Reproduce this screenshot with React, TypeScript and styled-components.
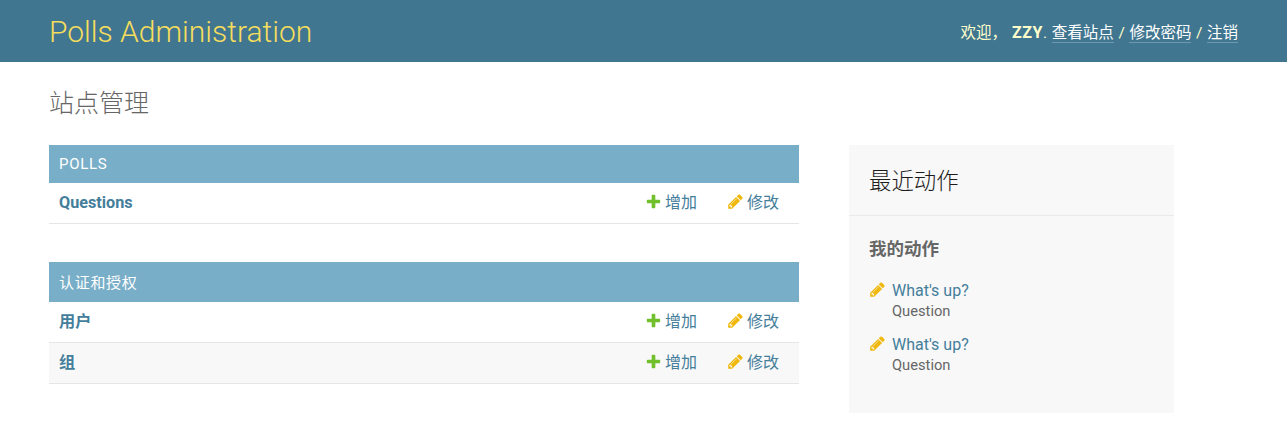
import React from "react";
import styled, { createGlobalStyle } from "styled-components";

const Global = createGlobalStyle`
  html, body { margin: 0; padding: 0; background: #fff; }
  body { font-family: Roboto, "Noto Sans CJK SC", sans-serif; font-size: 14px; color: #333; }
  * { box-sizing: border-box; }
`;

const Header = styled.header`
  height: 62px;
  background: #417690;
  padding: 0 49px;
  display: flex;
  align-items: center;
  justify-content: space-between;
`;
const Brand = styled.h1`
  margin: 0;
  font-size: 30px;
  font-weight: 300;
  color: #f5dd5d;
`;
const UserTools = styled.div`
  font-size: 15.5px;
  font-weight: 400;
  color: #ffc;
  white-space: pre;
  word-spacing: 0.75px;
`;
const UserName = styled.strong`
  font-weight: 700;
  margin-left: 5px;
  font-size: 16px;
  letter-spacing: 0.6px;
`;
const ToolLink = styled.a`
  color: #fff;
  border-bottom: 1px solid rgba(255, 255, 255, 0.25);
`;
const Main = styled.main`
  padding: 24px 49px 0;
`;
const Title = styled.h2`
  margin: 0 0 24px;
  font-size: 25px;
  font-weight: 300;
  line-height: 35px;
  color: #666;
`;
const Columns = styled.div`
  display: flex;
  gap: 50px;
  align-items: flex-start;
`;
const Content = styled.div`
  width: 750px;
  display: flex;
  flex-direction: column;
  gap: 38px;
`;
const Caption = styled.div<{ $h: number }>`
  height: ${(p) => p.$h}px;
  background: #79aec8;
  color: #fff;
  font-size: 15px;
  padding: 0 10px ${(p) => (p.$h > 38 ? 2 : 0)}px;
  display: flex;
  align-items: center;
  letter-spacing: 0.7px;
`;
const Row = styled.div<{ $alt?: boolean }>`
  height: 41px;
  padding: 0 20px 4px 10px;
  display: flex;
  align-items: center;
  border-bottom: 1px solid #e6e6e6;
  background: ${(p) => (p.$alt ? "#f8f8f8" : "#fff")};
`;
const ModelName = styled.a<{ $latin?: boolean }>`
  flex: 1;
  margin-top: ${(p) => (p.$latin ? 2 : 0)}px;
  font-size: 16.2px;
  font-weight: 700;
  color: #447e9b;
`;
const Action = styled.a`
  display: flex;
  align-items: center;
  gap: 3px;
  font-size: 16px;
  color: #447e9b;
  margin-left: 30px;
`;
const Icon = styled.svg`
  width: 17px;
  height: 17px;
`;
const Sidebar = styled.aside`
  width: 325px;
  height: 268px;
  background: #f8f8f8;
`;
const SideTitle = styled.h2`
  margin: 0;
  height: 71px;
  padding: 0 20px 2px;
  display: flex;
  align-items: center;
  font-size: 22.4px;
  font-weight: 300;
  color: #1c1c1c;
  border-bottom: 1px solid #eaeaea;
`;
const SideBody = styled.div`
  padding: 21px 20px 0;
`;
const SideHead = styled.h3`
  margin: 0 0 19px;
  font-size: 17.5px;
  font-weight: 700;
  line-height: 24px;
  color: #666;
`;
const Entry = styled.div`
  display: flex;
  gap: 6px;
  margin-bottom: 12px;
`;
const EntryIcon = styled(Icon)`
  margin-top: 1px;
  flex: none;
`;
const EntryText = styled.div`
  display: flex;
  flex-direction: column;
  font-size: 15.4px;
  line-height: 21px;
`;
const EntryLink = styled.a`
  color: #447e9b;
  font-size: 16px;
`;
const EntryType = styled.span`
  color: #666;
  font-size: 14.7px;
`;

const Plus = () => (
  <Icon viewBox="0 0 1792 1792">
    <path fill="#70bf2b" d="M1600 796v192q0 40-28 68t-68 28h-416v416q0 40-28 68t-68 28h-192q-40 0-68-28t-28-68v-416h-416q-40 0-68-28t-28-68v-192q0-40 28-68t68-28h416v-416q0-40 28-68t68-28h192q40 0 68 28t28 68v416h416q40 0 68 28t28 68z" />
  </Icon>
);
const pencil = "M491 1536l91-91-235-235-91 91v107h128v128h107zm523-928q0-22-22-22-10 0-17 7l-542 542q-7 7-7 17 0 22 22 22 10 0 17-7l542-542q7-7 7-17zm-54-192l416 416-832 832h-416v-416zm683 96q0 53-37 90l-166 166-416-416 166-165q36-38 90-38 53 0 91 38l235 234q37 39 37 91z";
const Pencil = () => (
  <Icon viewBox="0 0 1792 1792">
    <path fill="#efb80b" d={pencil} />
  </Icon>
);

const ModelRow = ({ name, alt, latin }: { name: string; alt?: boolean; latin?: boolean }) => (
  <Row $alt={alt}>
    <ModelName $latin={latin}>{name}</ModelName>
    <Action><Plus />增加</Action>
    <Action><Pencil />修改</Action>
  </Row>
);

const LogEntry = () => (
  <Entry>
    <EntryIcon viewBox="0 0 1792 1792"><path fill="#efb80b" d={pencil} /></EntryIcon>
    <EntryText>
      <EntryLink>What's up?</EntryLink>
      <EntryType>Question</EntryType>
    </EntryText>
  </Entry>
);

export default function App() {
  return (
    <>
      <Global />
      <Header>
        <Brand>Polls Administration</Brand>
        <UserTools>
          欢迎，<UserName>ZZY</UserName>. <ToolLink>查看站点</ToolLink> / <ToolLink>修改密码</ToolLink> / <ToolLink>注销</ToolLink>
        </UserTools>
      </Header>
      <Main>
        <Title>站点管理</Title>
        <Columns>
          <Content>
            <section>
              <Caption $h={38}>POLLS</Caption>
              <ModelRow name="Questions" latin />
            </section>
            <section>
              <Caption $h={40}>认证和授权</Caption>
              <ModelRow name="用户" />
              <ModelRow name="组" alt />
            </section>
          </Content>
          <Sidebar>
            <SideTitle>最近动作</SideTitle>
            <SideBody>
              <SideHead>我的动作</SideHead>
              <LogEntry />
              <LogEntry />
            </SideBody>
          </Sidebar>
        </Columns>
      </Main>
    </>
  );
}
